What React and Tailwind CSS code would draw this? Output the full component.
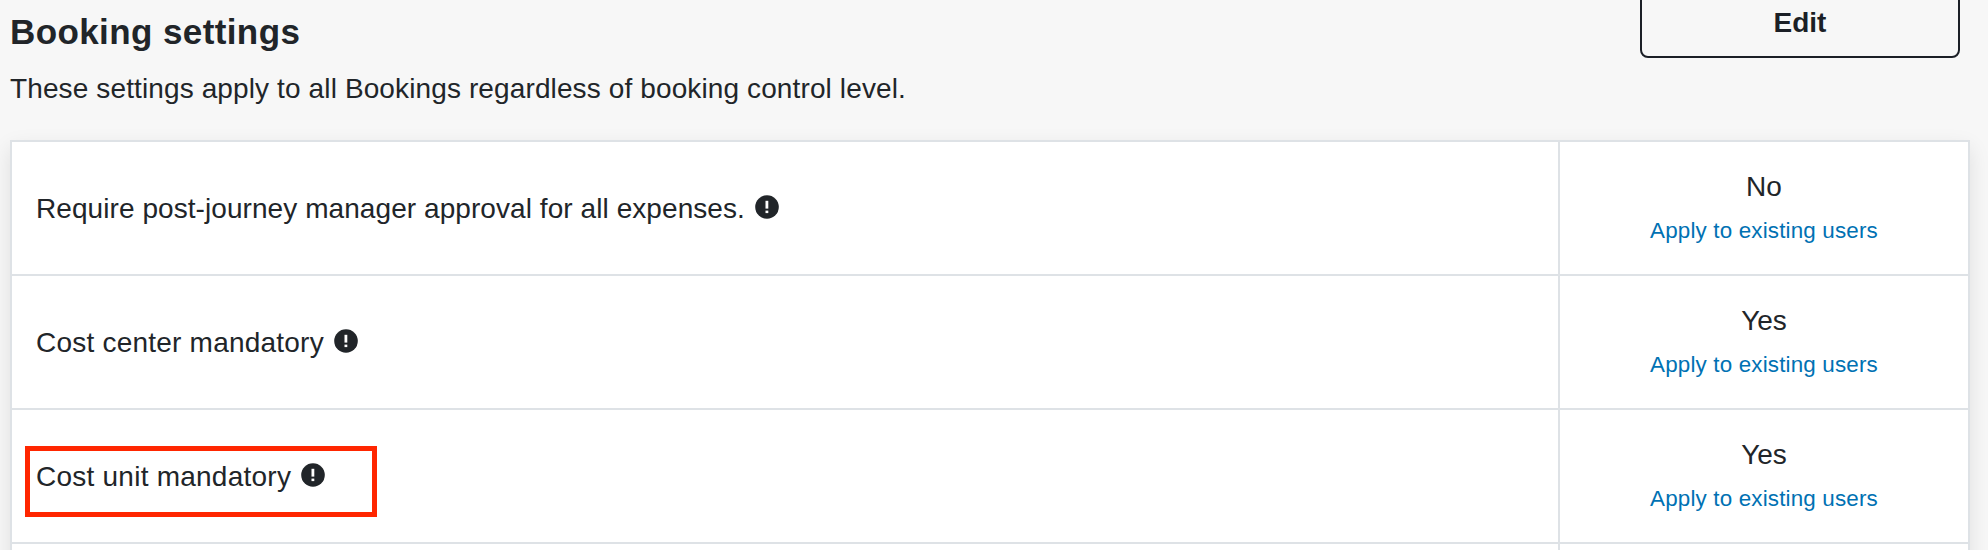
import React from 'react';

const SETTINGS = [
  {
    label: 'Require post-journey manager approval for all expenses.',
    value: 'No',
    tracking: 'tracking-[0.07px]'
  },
  { label: 'Cost center mandatory', value: 'Yes', tracking: 'tracking-[0.22px]' },
  { label: 'Cost unit mandatory', value: 'Yes', tracking: 'tracking-[0.24px]', highlighted: true }
];

function InfoIcon() {
  return (
    <svg className="w-6 h-6 shrink-0" viewBox="0 0 24 24">
      <circle cx="12" cy="12" r="11.8" fill="#212529" />
      <rect x="10.5" y="5.8" width="2.8" height="7.8" fill="#fff" />
      <rect x="10.5" y="15.6" width="2.8" height="2.5" fill="#fff" />
    </svg>
  );
}

function SettingRow({ label, value, tracking, highlighted }) {
  return (
    <div className="relative flex h-[134px] border-b-2 border-[#dee2e6]">
      <div className="flex-1 flex items-center pl-6">
        <span className={`pt-0.5 text-[28px] leading-[42px] whitespace-nowrap ${tracking}`}>{label}</span>
        <span className="ml-2.5 -mt-[3px]"><InfoIcon /></span>
      </div>
      <div className="w-[410px] border-l-2 border-[#dee2e6] pt-6 text-center">
        <div className="text-[28px] leading-[42px]">{value}</div>
        <a href="#" className="block mt-1.5 text-[22.4px] leading-[34px] tracking-[0.17px] text-[#0071b3]">
          Apply to existing users
        </a>
      </div>
      {highlighted && (
        <div className="absolute left-[13px] top-9 w-[352px] h-[71px] border-5 border-[#ff2600]" />
      )}
    </div>
  );
}

function App() {
  return (
    <div className="h-[550px] overflow-hidden bg-[#f7f7f7] text-[#212529] font-['Liberation_Sans',sans-serif]">
      {/* Header */}
      <header className="flex justify-between h-[140px] pl-2.5 pr-7">
        <div className="pt-3">
          <h1 className="text-[35px] leading-10 font-bold tracking-[0.4px]">Booking settings</h1>
          <p className="mt-4 text-[28px] leading-[42px] tracking-[0.12px]">
            These settings apply to all Bookings regardless of booking control level.
          </p>
        </div>
        <button className="-mt-5 w-80 h-[78px] pt-2 border-2 border-[#1b1f26] rounded-lg text-[28px] leading-[42px] font-bold text-[#1b1f26]">
          Edit
        </button>
      </header>

      {/* Settings table */}
      <div className="ml-2.5 mr-[18px] h-[430px] bg-white border-2 border-[#dee2e6] shadow-[0_8px_20px_rgba(0,0,0,0.1)]">
        {SETTINGS.map((setting) => (
          <SettingRow key={setting.label} {...setting} />
        ))}
        <div className="flex h-6">
          <div className="flex-1" />
          <div className="w-[410px] border-l-2 border-[#dee2e6]" />
        </div>
      </div>
    </div>
  );
}

export default App;
